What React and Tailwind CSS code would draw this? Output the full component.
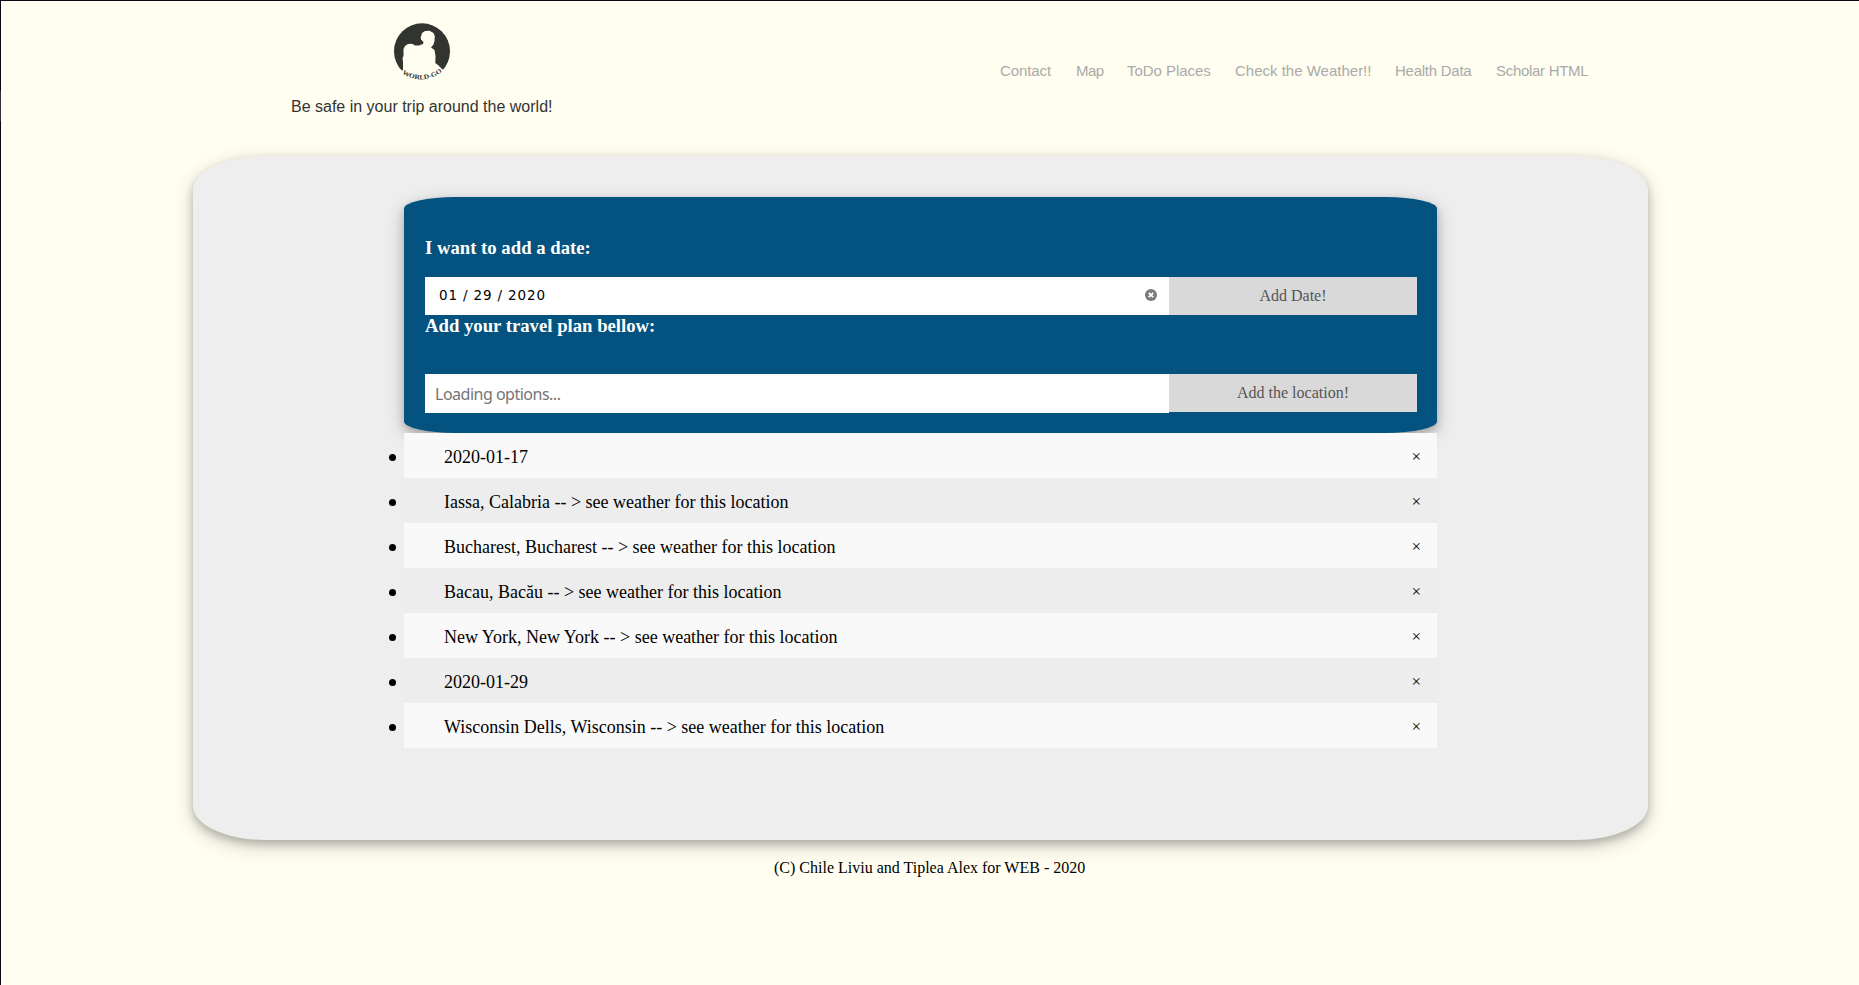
const NAV = [
  { label: 'Contact', style: 'w-[76px] tracking-[-0.1px]' },
  { label: 'Map', style: 'w-[51px] tracking-[-0.6px]' },
  { label: 'ToDo Places', style: 'w-[108px] tracking-[-0.05px]' },
  { label: 'Check the Weather!!', style: 'w-[160px]' },
  { label: 'Health Data', style: 'w-[101px] tracking-[-0.25px]' },
  { label: 'Scholar HTML', style: 'w-[93px] tracking-[-0.3px]' },
];

const PLANS = [
  '2020-01-17',
  'Iassa, Calabria -- > see weather for this location',
  'Bucharest, Bucharest -- > see weather for this location',
  'Bacau, Bacău -- > see weather for this location',
  'New York, New York -- > see weather for this location',
  '2020-01-29',
  'Wisconsin Dells, Wisconsin -- > see weather for this location',
];

function Logo() {
  return (
    <svg className="h-16 w-16" viewBox="0 0 64 64">
      <circle cx="32" cy="31.3" r="28" fill="#32342f" />
      <path
        d="M13 50 L13 42 L12.500 38 L13.500 36 L13.500 29 L15 26 L18 24 L22 23.800 L25 25.500 L29 25.500 L33 24 L33.500 22 L31 19.500 L30.700 17.500 L32 13 L35 11 L39.500 10.700 L43.500 13 L44.800 16 L44.500 21 L43.500 24.500 L41 27.500 L44.500 30 L45.500 36 L45.300 43 L48 45 L52.500 49.500 L58 52 L50 62 L32 64 L14 62 L6 53 Z"
        fill="#fffef0"
      />
      <path id="arc" d="M12 53.500 Q 32 66.500 53.500 51" fill="none" />
      <text fontSize="6.500" fontWeight="bold" fill="#32342f" fontFamily="Liberation Serif, serif">
        <textPath href="#arc" textLength="43" lengthAdjust="spacingAndGlyphs">WORLD-GO</textPath>
      </text>
    </svg>
  );
}

function ClearIcon() {
  return (
    <svg className="h-3 w-3" viewBox="0 0 12 12">
      <circle cx="6" cy="6" r="6" fill="#7b7b7b" />
      <path d="M3.800 3.800 L8.200 8.200 M8.200 3.800 L3.800 8.200" stroke="#fff" strokeWidth="1.800" />
    </svg>
  );
}

export default function App() {
  return (
    <div className="flex h-[985px] w-[1859px] overflow-hidden bg-[#fffef0] font-['Liberation_Serif',serif] text-black">
      <div className="w-px shrink-0 bg-[#0e0814]">
        <div className="mt-[91px] h-[30px] bg-[#33333b]" />
      </div>
      <div className="flex min-w-0 flex-1 flex-col border-t border-[#0e0814]">
        <header className="flex h-[155px] justify-between pr-[270px] pl-[290px] font-['Liberation_Sans',sans-serif]">
          <div className="flex flex-col items-center pt-[19px]">
            <Logo />
            <p className="mt-[11px] text-base leading-6 text-[#333]">Be safe in your trip around the world!</p>
          </div>
          <nav className="flex pt-[58px] text-[15px] leading-6 whitespace-nowrap text-[#aaa]">
            {NAV.map((n) => (
              <a key={n.label} className={n.style}>
                {n.label}
              </a>
            ))}
          </nav>
        </header>
        <main className="ml-[192px] flex h-[684px] w-[1455px] shrink-0 flex-col rounded-[5%] bg-[#eee] pt-[41px] pl-[211px] shadow-[0_4px_8px_0_rgba(0,0,0,0.2),0_6px_20px_0_rgba(0,0,0,0.19)]">
          <section className="h-[236px] w-[1033px] shrink-0 rounded-[5%] bg-[#04527f] px-[21px] pt-[39px] shadow-[0_4px_8px_0_rgba(0,0,0,0.2),0_6px_20px_0_rgba(0,0,0,0.19)]">
            <h3 className="h-[41px] text-[18.72px] leading-6 font-bold text-white">I want to add a date:</h3>
            <div className="flex h-[38px] w-[992px]">
              <div className="flex flex-1 items-center justify-between bg-white pr-[12px] pb-[2px] pl-[14px]">
                <span className="font-['DejaVu_Sans',sans-serif] text-[13.5px] tracking-[0.85px]">01 / 29 / 2020</span>
                <ClearIcon />
              </div>
              <button className="w-[248px] bg-[#d9d9d9] text-base text-[#555]">Add Date!</button>
            </div>
            <h3 className="h-[59px] text-[18.72px] leading-[22px] font-bold text-white">Add your travel plan bellow:</h3>
            <div className="flex w-[992px] items-start">
              <div className="flex h-[39px] flex-1 items-center bg-white pl-[10px] font-['Noto_Sans',sans-serif] text-base tracking-[-0.5px] text-[#757575]">
                Loading options...
              </div>
              <button className="h-[38px] w-[248px] bg-[#d9d9d9] text-base text-[#555]">Add the location!</button>
            </div>
          </section>
          <ul className="relative w-[1033px] text-[18px]">
            {PLANS.map((p) => (
              <li key={p} className="flex h-[45px] items-center bg-[#ededed] pt-[3px] pr-4 pl-10 odd:bg-[#f9f9f9]">
                <span className="mr-12 -ml-[55px] size-[7px] rounded-full bg-black" />
                <span className="flex-1">{p}</span>
                <span className="text-[17px]">×</span>
              </li>
            ))}
          </ul>
        </main>
        <footer className="ml-[773px] pt-4 text-base leading-6">(C) Chile Liviu and Tiplea Alex for WEB - 2020</footer>
      </div>
    </div>
  );
}
